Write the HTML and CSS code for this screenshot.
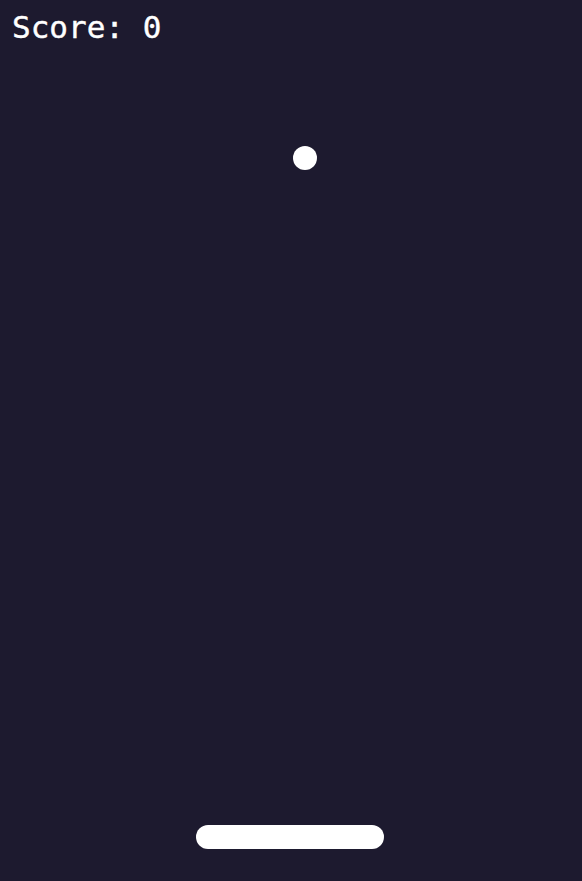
FILE: index.html
```html
<!DOCTYPE html>
<html>
<head>
<meta charset="utf-8">
<link rel="stylesheet" href="styles.css">
</head>
<body>
<div class="game">
  <div class="score">Score: 0</div>
  <div class="ball"></div>
  <div class="paddle"></div>
</div>
</body>
</html>
```
FILE: styles.css
```css
html, body {
  margin: 0;
  padding: 0;
  background: #1d1a2f;
}
.game {
  position: relative;
  width: 582px;
  height: 881px;
  overflow: hidden;
  background: #1d1a2f;
}
.score {
  padding: 12px 0 0 12px;
  font-family: "DejaVu Sans Mono", monospace;
  font-size: 31px;
  line-height: 30px;
  color: #ffffff;
  -webkit-text-stroke: 0.4px #ffffff;
}
.ball {
  position: absolute;
  left: 293px;
  top: 146px;
  width: 24px;
  height: 24px;
  border-radius: 50%;
  background: #ffffff;
}
.paddle {
  position: absolute;
  left: 196px;
  top: 825px;
  width: 188px;
  height: 24px;
  border-radius: 12px;
  background: #ffffff;
}
```
